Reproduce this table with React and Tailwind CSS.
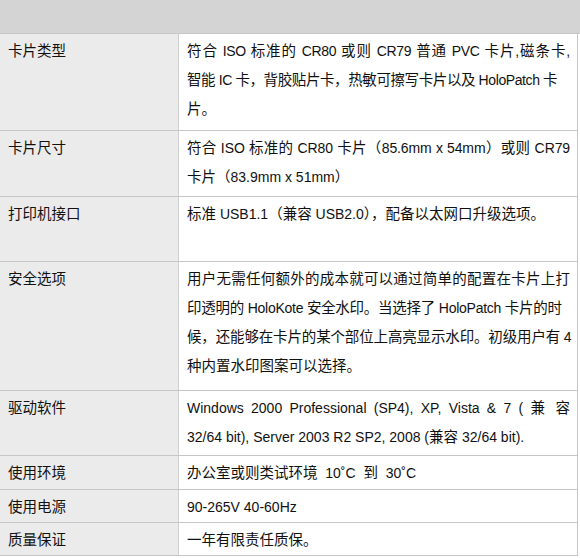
import React from "react";

const T = (s) =>
  s.split(/([\x20-\x7E\u00A0˚]+)/).map((p, i) =>
    /^[\x20-\x7E\u00A0˚]+$/.test(p) ? (
      <span key={i} className="text-[14px]">{p}</span>
    ) : (
      p
    )
  );

const J = ({ t, cls = "" }) => (
  <div className={`whitespace-nowrap text-justify [text-align-last:justify] ${cls}`}>{T(t)}</div>
);
const L = ({ t, cls = "" }) => <div className={`whitespace-nowrap ${cls}`}>{T(t)}</div>;

const rows = [
  {
    k: "卡片类型",
    h: "h-[97px]",
    v: (
      <>
        <J cls="tracking-[-0.3px]" t="符合 ISO 标准的 CR80 或则 CR79 普通 PVC 卡片,磁条卡," />
        <L cls="tracking-[-0.4px]" t="智能 IC 卡，背胶贴片卡，热敏可擦写卡片以及 HoloPatch 卡" />
        <L t="片。" />
      </>
    ),
  },
  {
    k: "卡片尺寸",
    h: "h-[66px]",
    v: (
      <>
        <J cls="tracking-[-0.1px]" t="符合 ISO 标准的 CR80 卡片（85.6mm x 54mm）或则 CR79" />
        <L t="卡片（83.9mm x 51mm）" />
      </>
    ),
  },
  {
    k: "打印机接口",
    h: "h-[65px]",
    v: <L t="标准 USB1.1（兼容 USB2.0），配备以太网口升级选项。" />,
  },
  {
    k: "安全选项",
    h: "h-[129px]",
    v: (
      <>
        <J t="用户无需任何额外的成本就可以通过简单的配置在卡片上打" />
        <L cls="tracking-[-0.25px]" t="印透明的 HoloKote 安全水印。当选择了 HoloPatch 卡片的时" />
        <L cls="tracking-[-0.15px]" t="候，还能够在卡片的某个部位上高亮显示水印。初级用户有 4" />
        <L t="种内置水印图案可以选择。" />
      </>
    ),
  },
  {
    k: "驱动软件",
    h: "h-[65px]",
    v: (
      <>
        <J t="Windows 2000 Professional (SP4), XP, Vista & 7 ( 兼 容" />
        <L t="32/64 bit), Server 2003 R2 SP2, 2008 (兼容 32/64 bit)." />
      </>
    ),
  },
  { k: "使用环境", h: "h-[34px]", v: <L t={"办公室或则类试环境\u00A0 10˚C\u00A0 到\u00A0 30˚C"} /> },
  { k: "使用电源", h: "h-[33px]", v: <L t="90-265V 40-60Hz" /> },
  { k: "质量保证", h: "h-[33px]", v: <L t="一年有限责任质保。" /> },
];

export default function App() {
  return (
    <div
      className="w-[580px] h-[558px] bg-white text-[14.5px] leading-[29px] text-[#111] [text-autospace:no-autospace]"
      style={{ fontFamily: '"Liberation Sans", "Noto Sans CJK SC", sans-serif' }}
    >
      <div className="h-[34px] bg-[#d4d4d4] border-b border-[#c6c6c6]" />
      <div className="w-[578px] border-r border-[#c6c6c6]">
        {rows.map((r, i) => (
          <div key={i} className={`flex ${r.h} border-b border-[#c6c6c6]`}>
            <div className="w-[179px] shrink-0 bg-[#ebebeb] border-r border-[#cfcfcf] pl-[8px] pt-[3px]">
              {r.k}
            </div>
            <div className="flex-1 min-w-0 pl-[8px] pr-[7px] pt-[3px]">{r.v}</div>
          </div>
        ))}
      </div>
    </div>
  );
}
